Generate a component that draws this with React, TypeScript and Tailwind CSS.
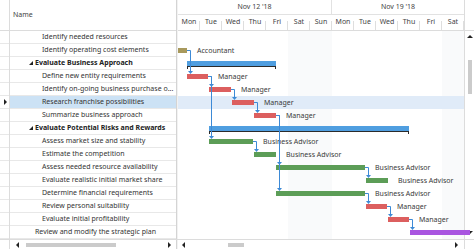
const ROW = 13;

type Bar = { x: number; w: number; kind: 'olive' | 'red' | 'green' | 'purple' | 'summary'; label?: string };
type Row = { name: string; pad: number; summary?: boolean; bar?: Bar };

const BAR_BG: Record<string, string> = {
  olive: 'bg-[#a8995c]',
  red: 'bg-[#dc5f5f]',
  green: 'bg-[#5c9d57]',
  purple: 'bg-[#a955e0]',
};

const rows: Row[] = [
  { name: 'Identify needed resources', pad: 32 },
  { name: 'Identify operating cost elements', pad: 32, bar: { x: 0, w: 9, kind: 'olive', label: 'Accountant' } },
  { name: 'Evaluate Business Approach', pad: 25, summary: true, bar: { x: 9, w: 89, kind: 'summary' } },
  { name: 'Define new entity requirements', pad: 32, bar: { x: 9, w: 21, kind: 'red', label: 'Manager' } },
  { name: 'Identify on-going business purchase o...', pad: 32, bar: { x: 31, w: 22, kind: 'red', label: 'Manager' } },
  { name: 'Research franchise possibilities', pad: 32, bar: { x: 54, w: 22, kind: 'red', label: 'Manager' } },
  { name: 'Summarize business approach', pad: 32, bar: { x: 76, w: 22, kind: 'red', label: 'Manager' } },
  { name: 'Evaluate Potential Risks and Rewards', pad: 25, summary: true, bar: { x: 31, w: 200, kind: 'summary' } },
  { name: 'Assess market size and stability', pad: 32, bar: { x: 31, w: 44, kind: 'green', label: 'Business Advisor' } },
  { name: 'Estimate the competition', pad: 32, bar: { x: 76, w: 22, kind: 'green', label: 'Business Advisor' } },
  { name: 'Assess needed resource availability', pad: 32, bar: { x: 98, w: 89, kind: 'green', label: 'Business Advisor' } },
  { name: 'Evaluate realistic initial market share', pad: 32, bar: { x: 188, w: 22, kind: 'green', label: 'Business Advisor' } },
  { name: 'Determine financial requirements', pad: 32, bar: { x: 98, w: 89, kind: 'green', label: 'Business Advisor' } },
  { name: 'Review personal suitability', pad: 32, bar: { x: 188, w: 21, kind: 'red', label: 'Manager' } },
  { name: 'Evaluate initial profitability', pad: 32, bar: { x: 210, w: 21, kind: 'red', label: 'Manager' } },
  { name: 'Review and modify the strategic plan', pad: 25, bar: { x: 232, w: 60, kind: 'purple' } },
];

// finish-to-start links: [predecessor row, successor row]
const links: [number, number][] = [
  [1, 3], [3, 4], [3, 8], [4, 5], [5, 6], [6, 10], [6, 12], [8, 9], [10, 11], [12, 13], [13, 14], [14, 15],
];

const SELECTED = 5;
const days = ['Mon', 'Tue', 'Wed', 'Thu', 'Fri', 'Sat', 'Sun', 'Mon', 'Tue', 'Wed', 'Thu', 'Fri', 'Sat'];

const Tri = ({ dir, className = '' }: { dir: 'up' | 'down' | 'left' | 'right' | 'corner'; className?: string }) => {
  const pts = {
    up: '0,4 3,1 6,4',
    down: '0,1 6,1 3,4',
    left: '4,0 4,6 1,3',
    right: '1,0 1,6 4,3',
    corner: '4,0 4,4 0,4',
  }[dir];
  const side = dir === 'left' || dir === 'right';
  const vb = side ? '0 0 5 6' : dir === 'corner' ? '0 0 4 4' : '0 0 6 5';
  const w = side ? 5 : dir === 'corner' ? 4 : 6;
  const h = side ? 6 : dir === 'corner' ? 4 : 5;
  return (
    <svg width={w} height={h} viewBox={vb} className={className}>
      <polygon points={pts} fill="#222" />
    </svg>
  );
};

function Connectors() {
  return (
    <svg className="absolute inset-0" width={286} height={208}>
      {links.map(([a, b]) => {
        const from = rows[a].bar!;
        const end = from.x + from.w;
        const x = end + 3.5;
        const y1 = a * ROW + 6.5;
        const tip = b * ROW + 4;
        return (
          <g key={`${a}-${b}`}>
            <polyline points={`${end},${y1} ${x},${y1} ${x},${tip - 3}`} fill="none" stroke="#3d8ad6" strokeWidth={1} />
            <polygon points={`${x - 2.5},${tip - 3} ${x + 2.5},${tip - 3} ${x},${tip}`} fill="#3d8ad6" />
          </g>
        );
      })}
    </svg>
  );
}

function ChartBar({ bar }: { bar: Bar }) {
  if (bar.kind === 'summary') {
    return (
      <div className="absolute top-[4px] h-[7px]" style={{ left: bar.x, width: bar.w }}>
        <div className="h-[5px] bg-[#4f9ee0]" />
        <div className="h-px bg-[#2b2b2b]" />
        <div className="absolute left-0 top-[5px] h-[3px] w-px bg-[#2b2b2b]" />
        <div className="absolute right-0 top-[5px] h-[3px] w-px bg-[#2b2b2b]" />
      </div>
    );
  }
  return (
    <>
      <div className={`absolute top-[4px] h-[5px] ${BAR_BG[bar.kind]}`} style={{ left: bar.x, width: bar.w }} />
      {bar.label && (
        <span className="absolute top-0 leading-[13px] text-[7px] text-[#3a3a3a] whitespace-nowrap" style={{ left: bar.x + bar.w + 10 }}>
          {bar.label}
        </span>
      )}
    </>
  );
}

export default function App() {
  return (
    <div className="w-[474px] h-[249px] overflow-hidden bg-white text-[#333] flex flex-col font-['Noto_Sans',sans-serif]">
      <div className="flex h-[239px]">
        {/* gutter */}
        <div className="w-[10px] flex flex-col border-r border-[#dcdcdc]">
          <div className="h-[31px] border-b border-[#dcdcdc]" />
          {rows.map((_, i) => (
            <div key={i} className="h-[13px] border-b border-[#e8e8e8] flex items-center pl-[3px]">
              {i === SELECTED && <Tri dir="right" />}
            </div>
          ))}
        </div>

        {/* name column */}
        <div className="w-[166px] flex flex-col">
          <div className="h-[31px] border-b border-[#dcdcdc] flex items-center pl-[3px] text-[7px] text-[#444]">Name</div>
          {rows.map((r, i) => (
            <div
              key={i}
              className={`h-[13px] border-b border-[#e8e8e8] flex items-center whitespace-nowrap overflow-hidden text-[7px] ${
                i === SELECTED ? 'bg-[#cce2f5]' : ''
              } ${r.summary ? 'font-bold text-[#222]' : 'text-[#333]'}`}
              style={{ paddingLeft: r.pad }}
            >
              {r.summary && <Tri dir="corner" className="-ml-[6px] mr-[2px]" />}
              {r.name}
            </div>
          ))}
        </div>

        {/* splitter */}
        <div className="w-[2px] border-l border-[#d4d4d4] bg-[#f2f2f2]" />

        {/* chart */}
        <div className="w-[286px] flex flex-col">
          <div className="h-[31px] flex flex-col border-b border-[#dcdcdc] text-[7px] text-[#444]">
            <div className="h-[15px] flex border-b border-[#e2e2e2]">
              <div className="w-[154px] border-r border-[#e2e2e2] flex items-center justify-center">Nov 12 '18</div>
              <div className="flex-1 flex items-center justify-center">Nov 19 '18</div>
            </div>
            <div className="flex-1 flex">
              {days.map((d, i) => (
                <div
                  key={i}
                  className="w-[22px] relative flex items-center justify-center after:absolute after:right-0 after:bottom-0 after:h-[9px] after:w-px after:bg-[#dedede] after:content-['']"
                >
                  {d}
                </div>
              ))}
            </div>
          </div>
          <div className="relative flex-1">
            <div className="flex h-full">
              {days.map((d, i) => (
                <div key={i} className={`w-[22px] h-full ${d === 'Sat' || d === 'Sun' ? 'bg-[#f9fafb]' : ''}`} />
              ))}
            </div>
            <div className="absolute inset-0 flex flex-col">
              {rows.map((r, i) => (
                <div key={i} className={`h-[13px] relative shrink-0 ${i === SELECTED ? 'bg-[#e0ebf8]' : ''}`}>
                  {r.bar && <ChartBar bar={r.bar} />}
                </div>
              ))}
            </div>
            <Connectors />
          </div>
        </div>

        {/* vertical scrollbar */}
        <div className="w-[10px] border-l border-[#dcdcdc] flex flex-col">
          <div className="h-[31px] border-b border-[#dcdcdc]" />
          <div className="flex-1 flex flex-col items-center pt-[3px] pb-[4px]">
            <Tri dir="up" />
            <div className="h-[21px]" />
            <div className="w-[4px] h-[34px] bg-[#cbcbcb]" />
            <div className="flex-1" />
            <Tri dir="down" />
          </div>
        </div>
      </div>

      {/* horizontal scrollbars */}
      <div className="h-[10px] flex border-t border-[#dcdcdc]">
        <div className="w-[10px] border-r border-[#dcdcdc]" />
        <div className="w-[166px] flex items-center pl-[5px] pr-[4px]">
          <Tri dir="left" />
          <div className="ml-[6px] w-[90px] h-[4px] bg-[#cbcbcb]" />
          <div className="flex-1" />
          <Tri dir="right" />
        </div>
        <div className="w-[2px] border-l border-[#d4d4d4] bg-[#f2f2f2]" />
        <div className="w-[286px] flex items-center pl-[3px] pr-[5px]">
          <Tri dir="left" />
          <div className="ml-[42px] w-[16px] h-[4px] bg-[#cbcbcb]" />
          <div className="flex-1" />
          <Tri dir="right" />
        </div>
        <div className="w-[10px] border-l border-[#dcdcdc]" />
      </div>
    </div>
  );
}
